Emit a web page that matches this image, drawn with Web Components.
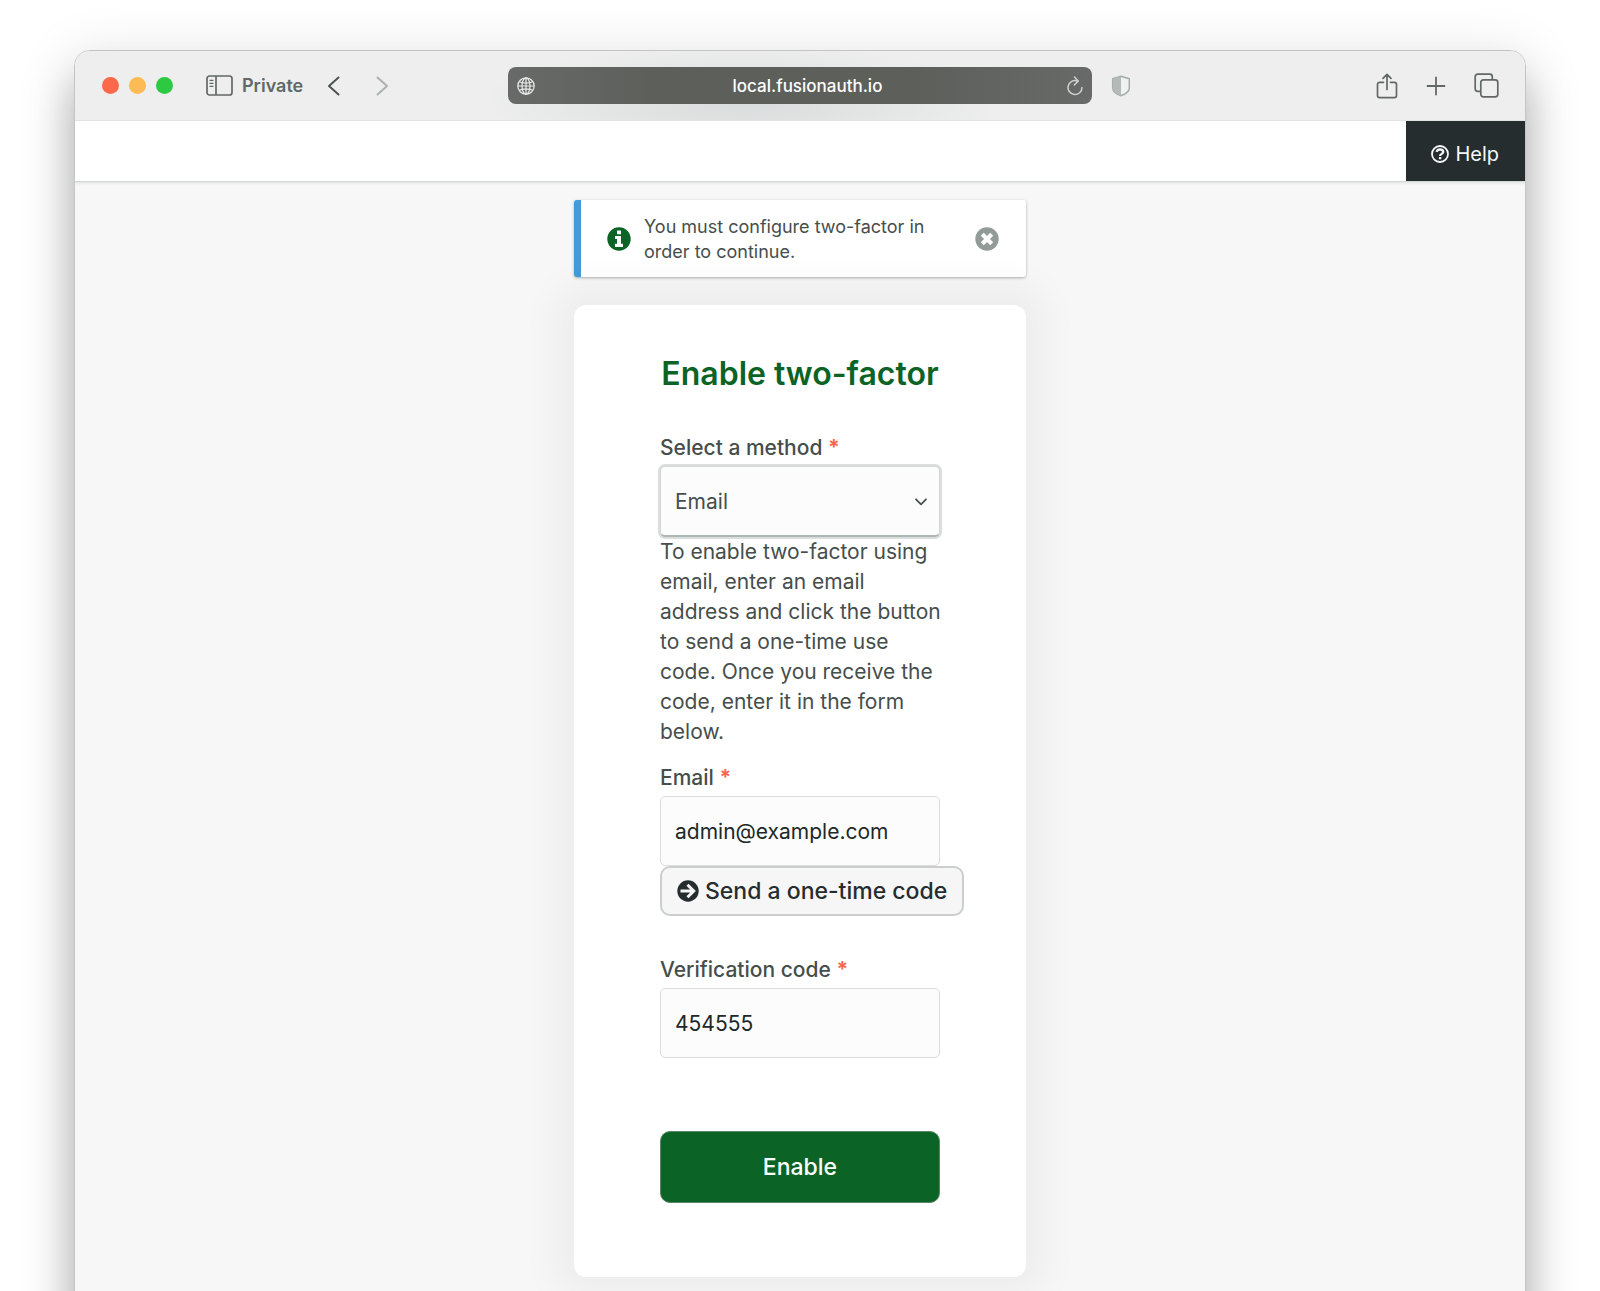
<!DOCTYPE html>
<html lang="en">
<head>
<meta charset="utf-8">
<meta name="viewport" content="width=device-width, initial-scale=1">
<title>Enable two-factor</title>
<style>
  body { margin: 0; background: #fff; font-family: Inter, "Liberation Sans", sans-serif; color: #464e4c; }
</style>
</head>
<body>
<browser-window address="local.fusionauth.io">
  <app-header></app-header>
  <app-page>
    <app-alert>You must configure two-factor in order to continue.</app-alert>
    <app-panel heading="Enable two-factor">
      <method-field label="Select a method">To enable two-factor using
email, enter an email
address and click the button
to send a one-time use
code. Once you receive the
code, enter it in the form
below.</method-field>
      <text-field label="Email" type="email" name="email" value="admin@example.com">
        <send-button>Send a one-time code</send-button>
      </text-field>
      <text-field label="Verification code" type="text" name="code" value="454555"></text-field>
      <submit-button>Enable</submit-button>
    </app-panel>
  </app-page>
</browser-window>

<script>
  const RESET = `*, *::before, *::after { box-sizing: border-box; } svg { display: block; flex: none; }
    button, input, select { font: inherit; color: inherit; margin: 0; } button { cursor: pointer; }`;

  function define(name, render) {
    customElements.define(name, class extends HTMLElement {
      constructor() { super(); this.attachShadow({ mode: 'open' }); }
      connectedCallback() {
        const t = document.createElement('template');
        t.innerHTML = `<style>${RESET}</style>` + render(this);
        this.shadowRoot.replaceChildren(t.content.cloneNode(true));
      }
    });
  }

  define('browser-window', el => `
    <style>
      :host { display: block; overflow: hidden; padding: 50px 74px 0; min-height: 100vh; box-sizing: border-box; }
      .window {
        margin-bottom: -120px; border: 1px solid #c3c5c4; border-radius: 16px; background: #f7f7f7;
        box-shadow: 0 34px 40px rgba(0,0,0,.26), 0 10px 56px 6px rgba(0,0,0,.11);
      }
      .clip { border-radius: 15px; overflow: hidden; }
      .bar {
        display: grid; grid-template-columns: 1fr minmax(0, 584px) 1fr; align-items: center; height: 70px;
        color: #626866; border-bottom: 1px solid #e3e5e4;
        background: radial-gradient(260px 60px at 46% 78%, #dadddd, #e4e5e5 55%, #eee) #eee;
      }
      .side { display: flex; align-items: center; }
      .side button { border: 0; padding: 0; background: none; display: block; }
      .left { padding-left: 27px; }
      .dots { display: flex; gap: 10px; margin-right: 33px; }
      .dots button { width: 17px; height: 17px; border-radius: 50%; }
      .private { display: flex; align-items: center; gap: 9px; font-size: 18px; font-weight: 600; margin-right: 24px; }
      .nav { display: flex; gap: 34px; }
      .address {
        display: flex; align-items: center; height: 37px; border-radius: 8px; padding: 0 8px 0 9px;
        color: #fff; background: linear-gradient(90deg, #686a69, #5d5f5b 25%, #5d5f5b 70%, #686a69);
      }
      .address input { flex: 1; min-width: 0; border: 0; padding: 0 0 0 14px; outline: 0; background: none; text-align: center; font-size: 17px; font-weight: 500; line-height: 24px; }
      .address button { border: 0; padding: 0; background: none; }
      .right { justify-content: space-between; padding: 0 26px 0 19px; }
      .actions { display: flex; align-items: center; gap: 28px; }
    </style>
    <div class="window"><div class="clip">
      <div class="bar">
        <div class="side left">
          <div class="dots">
            <button aria-label="Close" style="background:#fb694a"></button>
            <button aria-label="Minimize" style="background:#fdbb55"></button>
            <button aria-label="Zoom" style="background:#2ec943"></button>
          </div>
          <div class="private">
            <svg width="27" height="21" viewBox="0 0 27 21" fill="none" stroke="currentColor" stroke-width="1.7"><rect x="1" y="1" width="25" height="19" rx="2.5"/><path d="M10 1v19"/><path stroke-width="1.3" stroke-linecap="round" d="M4 5.3h3M4 8.3h3M4 11.3h3"/></svg>
            <span>Private</span>
          </div>
          <div class="nav">
            <button aria-label="Back"><svg width="14" height="20" viewBox="0 0 14 20" fill="none" stroke="#4d5351" stroke-width="2" stroke-linecap="round" stroke-linejoin="round"><path d="M11.5 1.5 2 10l9.500 8.500"/></svg></button>
            <button aria-label="Forward"><svg width="14" height="20" viewBox="0 0 14 20" fill="none" stroke="#a9b2af" stroke-width="2" stroke-linecap="round" stroke-linejoin="round"><path d="m2.500 1.500 9.500 8.500-9.500 8.500"/></svg></button>
          </div>
        </div>
        <div class="address">
          <svg width="18" height="18" viewBox="0 0 18 18" fill="none" stroke="#e8ebea" stroke-width="1.2"><circle cx="9" cy="9" r="8.200"/><ellipse cx="9" cy="9" rx="4" ry="8.200"/><path d="M9 .8v16.400M.8 9h16.400M2.300 4.800c4 1.600 9.400 1.600 13.400 0M2.300 13.200c4-1.600 9.400-1.600 13.400 0"/></svg>
          <input type="text" aria-label="Address" value="${el.getAttribute('address')}">
          <button aria-label="Reload"><svg width="18" height="20" viewBox="0 0 18 20" fill="none" stroke="#ccd1cf" stroke-width="1.500" stroke-linecap="round" stroke-linejoin="round"><path d="M11.500 5A7 7 0 1 0 16 11.500M8.500 1l3.700 4.100L8.300 9"/></svg></button>
        </div>
        <div class="side right">
          <button aria-label="Privacy report"><svg width="20" height="22" viewBox="0 0 20 22"><path d="M10 1.200 18.300 3.800v9.400c0 3.300-4.300 6-8.300 7.600-4-1.600-8.300-4.300-8.300-7.600V3.800z" fill="#f0f1f1" stroke="#a3acaa" stroke-width="1.500" stroke-linejoin="round"/><path d="M10 1.200v19.600c-4-1.600-8.300-4.300-8.300-7.600V3.800z" fill="#b3bab8"/></svg></button>
          <div class="actions">
            <button aria-label="Share"><svg width="22" height="26" viewBox="0 0 22 26" fill="none" stroke="currentColor" stroke-width="1.700" stroke-linecap="round" stroke-linejoin="round"><path d="M7.500 9.300H3.700A2.200 2.200 0 0 0 1.500 11.500v11A2.200 2.200 0 0 0 3.700 24.700h14.600a2.200 2.200 0 0 0 2.200-2.200v-11a2.200 2.200 0 0 0-2.200-2.200h-3.800M11 16.500V1.500M7 5.300l4-4 4 4"/></svg></button>
            <button aria-label="New tab"><svg width="20" height="20" viewBox="0 0 20 20" fill="none" stroke="currentColor" stroke-width="1.800" stroke-linecap="round"><path d="M10 1.500v17M1.500 10h17"/></svg></button>
            <button aria-label="Tab overview"><svg width="25" height="25" viewBox="0 0 25 25" fill="none" stroke="currentColor" stroke-width="1.700" stroke-linejoin="round"><rect x="6.800" y="6.800" width="17" height="17" rx="2.500"/><path d="M6.800 18.300H3.700A2.500 2.500 0 0 1 1.200 15.800V3.700A2.500 2.500 0 0 1 3.700 1.200h12.100a2.500 2.500 0 0 1 2.500 2.500v3.100"/></svg></button>
          </div>
        </div>
      </div>
      <slot></slot>
    </div></div>`);

  define('app-header', () => `
    <style>
      :host { display: flex; justify-content: flex-end; height: 60px; background: #fff; box-shadow: 0 1px 0 #d3d9d7, 0 2px 3px rgba(0,0,0,.1); position: relative; }
      a { display: flex; align-items: center; gap: 6px; padding: 6px 26px 0 25px; background: #252d2e; color: #f7f8f8; text-decoration: none; font-size: 20px; }
    </style>
    <a href="#help">
      <svg width="18" height="18" viewBox="0 0 18 18" fill="none" stroke="currentColor"><circle cx="9" cy="9" r="8" stroke-width="1.800"/><path stroke-width="2.300" d="M5.700 6.900C6 5.300 7.300 4.500 9 4.500c1.800 0 3.200 1 3.200 2.400 0 2-3.100 2-3.100 4"/><path stroke-width="2.400" d="M9.100 12v2.300"/></svg>
      Help</a>`);

  define('app-page', () => `
    <style>
      :host { display: flex; flex-direction: column; align-items: center; gap: 28px; padding: 19px 16px 134px; }
      ::slotted(*) { width: 100%; max-width: 452px; }
    </style>
    <slot></slot>`);

  define('app-alert', () => `
    <style>
      :host { display: flex; align-items: center; gap: 13px; box-sizing: border-box; padding: 14px 27px 13px 26px; background: #fff;
        border-left: 7px solid #439bdc; border-radius: 3px; box-shadow: 0 1px 3px rgba(0,0,0,.3); font-size: 18px; line-height: 25px; }
      p { margin: 0; flex: 1; padding-right: 32px; }
      button { border: 0; padding: 0; background: none; }
    </style>
    <svg width="24" height="24" viewBox="0 0 24 24"><circle cx="12" cy="12" r="11.700" fill="#0b6425"/><path fill="#fff" d="M10 3.500h4v3.800h-4zM8 9h6v7.800h2V20H8v-3.200h2V12H8z"/></svg>
    <p><slot></slot></p>
    <button aria-label="Dismiss"><svg width="24" height="24" viewBox="0 0 24 24"><circle cx="12" cy="12" r="11.700" fill="#929b97"/><path stroke="#fff" stroke-width="4.200" d="m7.300 7.300 9.400 9.400M16.700 7.300l-9.400 9.400"/></svg></button>`);

  define('app-panel', el => `
    <style>
      :host { display: block; box-sizing: border-box; position: relative; padding: 48px 86px 74px; background: #fff; border-radius: 12px;
        box-shadow: 0 0 36px 22px rgba(0,0,0,.04); }
      h1 { margin: 0 -20px 39px; text-align: center; color: #0b6425; font-size: 32px; line-height: 42px; font-weight: 600; }
      form { display: flex; flex-direction: column; }
    </style>
    <h1>${el.getAttribute('heading')}</h1>
    <form><slot></slot></form>`);

  const FIELD = `
    :host { display: block; }
    label { display: block; font-size: 21px; line-height: 28px; margin-bottom: 4px; font-weight: 500; }
    .req { color: #f9664a; font-weight: 700; }
    input, select { display: block; width: 100%; height: 70px; padding: 0 14px; border: 1px solid #d9dddc; border-radius: 5px; background: #fcfcfc; font-size: 21px; }
    input { color: #202828; outline: 0; }`;

  define('method-field', el => `
    <style>${FIELD}
      .box { display: grid; align-items: center; }
      .box > * { grid-area: 1 / 1; }
      select { height: 71px; appearance: none; border-color: #d3d8d6; border-bottom: 2px solid #adb6b3; box-shadow: 0 0 0 2px #dadedd; padding-right: 40px; outline: 0; }
      svg { justify-self: end; margin-right: 13px; pointer-events: none; }
      p { margin: 0 -8px 17px 0; font-size: 21px; line-height: 30px; white-space: pre-line; }
    </style>
    <label for="method">${el.getAttribute('label')} <span class="req">*</span></label>
    <div class="box">
      <select id="method"><option>Email</option><option>Authenticator app</option></select>
      <svg width="12" height="8" viewBox="0 0 12 8" fill="none" stroke="#4a5250" stroke-width="1.800" stroke-linecap="round" stroke-linejoin="round"><path d="m1 1.300 5 5 5-5"/></svg>
    </div>
    <p><slot></slot></p>`);

  define('text-field', el => `
    <style>${FIELD}</style>
    <label for="field">${el.getAttribute('label')} <span class="req">*</span></label>
    <input id="field" type="${el.getAttribute('type')}" name="${el.getAttribute('name')}" value="${el.getAttribute('value')}">
    <slot></slot>`);

  define('send-button', () => `
    <style>
      :host { display: flex; margin: 0 -40px 40px 0; }
      button { display: flex; align-items: center; gap: 6px; height: 50px; padding: 0 15px; border: 2px solid #cbcecd; border-radius: 10px;
        background: #f6f6f6; color: #252d2e; font-size: 23px; font-weight: 500; white-space: nowrap; }
    </style>
    <button type="button"><svg width="22" height="22" viewBox="0 0 22 22"><circle cx="11" cy="11" r="10.700" fill="currentColor"/><path fill="none" stroke="#f6f6f6" stroke-width="3" d="M3.500 11H16M10.500 4.800l6.200 6.200-6.200 6.200"/></svg><slot></slot></button>`);

  define('submit-button', () => `
    <style>
      :host { display: block; margin-top: 73px; }
      button { width: 100%; height: 72px; border: 1px solid #5b8768; border-radius: 10px; background: #0b6425; color: #fff; font-size: 23px; font-weight: 500; }
    </style>
    <button type="submit"><slot></slot></button>`);
</script>
</body>
</html>
